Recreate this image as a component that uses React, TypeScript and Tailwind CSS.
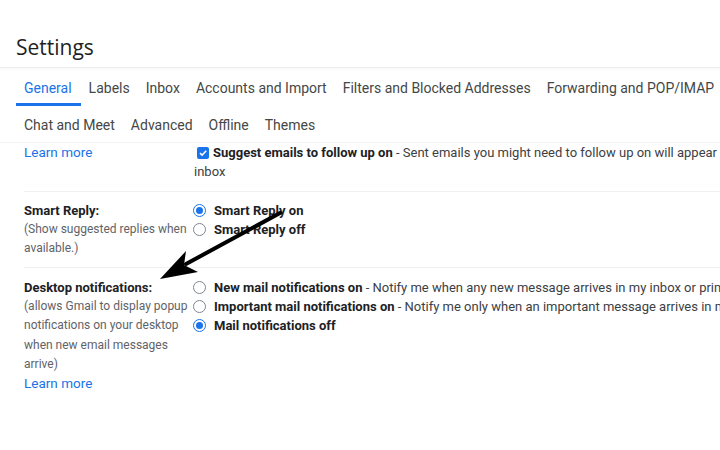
import React from "react";

const Radio = ({ checked }: { checked?: boolean }) =>
  checked ? (
    <span className="mr-[8px] inline-flex h-[13px] w-[13px] shrink-0 items-center justify-center rounded-full border-[1.5px] border-[#1a73e8]">
      <span className="h-[7px] w-[7px] rounded-full bg-[#1a73e8]" />
    </span>
  ) : (
    <span className="mr-[8px] inline-block h-[13px] w-[13px] shrink-0 rounded-full border border-[#80868b]" />
  );

export default function App() {
  const row1 = ["General", "Labels", "Inbox", "Accounts and Import", "Filters and Blocked Addresses", "Forwarding and POP/IMAP"];
  const row2 = ["Chat and Meet", "Advanced", "Offline", "Themes"];
  return (
    <div className="relative h-[450px] w-[720px] overflow-hidden bg-white text-[#202124]" style={{ fontFamily: "Roboto, 'Liberation Sans', sans-serif" }}>
      <div className="flex h-[68px] items-start border-b border-[#eceff1] pl-[16px] pt-[36px] shadow-[0_1px_2px_rgba(0,0,0,0.04)]">
        <span className="text-[21px] leading-[22px] text-[#1f1f1f]" style={{ fontFamily: "'Open Sans', Roboto, sans-serif" }}>Settings</span>
      </div>
      <div className="pl-[16px] text-[14px] text-[#444746]">
        <div className="flex h-[38px] whitespace-nowrap">
          {row1.map((t, i) => (
            <div key={t} className={"flex items-center px-[8px] pt-[5px] " + (i === 0 ? "border-b-[3px] border-[#1a73e8] pr-[9px] text-[#1a73e8]" : "border-b-[3px] border-transparent")}>
              {t}
            </div>
          ))}
        </div>
        <div className="flex h-[36px] whitespace-nowrap">
          {row2.map((t) => (
            <div key={t} className="flex items-center px-[8px] pt-[2px]">{t}</div>
          ))}
        </div>
      </div>
      <div className="border-t border-[#f1f3f4] text-[13px] leading-[19px]">
        <div className="ml-[24px] flex border-b border-[#eef0f1] pb-[10px]">
          <div className="w-[170px] shrink-0 text-[13.5px] text-[#1a73e8]">Learn more</div>
          <div className="min-w-0 whitespace-nowrap">
            <div className="flex items-center pl-[3px]">
              <span className="mr-[4px] inline-flex h-[12px] w-[12px] shrink-0 items-center justify-center rounded-[2px] bg-[#1a73e8]">
                <svg width="10" height="10" viewBox="0 0 10 10"><path d="M2 5.2 L4.1 7.2 L8.2 2.8" stroke="white" strokeWidth="1.6" fill="none" /></svg>
              </span>
              <span className="font-bold">Suggest emails to follow up on</span>
              <span className="text-[#3c4043]">&nbsp;- Sent emails you might need to follow up on will appear at the top of your</span>
            </div>
            <div className="text-[#3c4043]">inbox</div>
          </div>
        </div>
        <div className="ml-[24px] flex border-b border-[#eef0f1] py-[9px]">
          <div className="w-[169px] shrink-0">
            <div className="font-bold">Smart Reply:</div>
            <div className="text-[12px] text-[#5f6368]">(Show suggested replies when available.)</div>
          </div>
          <div className="whitespace-nowrap font-bold">
            <div className="flex items-center"><Radio checked />Smart Reply on</div>
            <div className="flex items-center"><Radio />Smart Reply off</div>
          </div>
        </div>
        <div className="ml-[24px] flex py-[10px]">
          <div className="w-[169px] shrink-0">
            <div className="font-bold">Desktop notifications:</div>
            <div className="text-[12px] leading-[19.3px] text-[#5f6368]">(allows Gmail to display popup notifications on your desktop when new email messages arrive)</div>
            <div className="text-[13.5px] text-[#1a73e8]">Learn more</div>
          </div>
          <div className="min-w-0 whitespace-nowrap">
            <div className="flex items-center"><Radio /><span className="font-bold">New mail notifications on</span><span className="text-[#3c4043]">&nbsp;- Notify me when any new message arrives in my inbox or primary tab</span></div>
            <div className="flex items-center"><Radio /><span className="font-bold">Important mail notifications on</span><span className="text-[#3c4043]">&nbsp;- Notify me only when an important message arrives in my inbox</span></div>
            <div className="flex items-center"><Radio checked /><span className="font-bold">Mail notifications off</span></div>
          </div>
        </div>
      </div>
      <svg className="pointer-events-none absolute left-0 top-0" width="720" height="450">
        <line x1="280" y1="213" x2="186" y2="264" stroke="#000" strokeWidth="4" strokeLinecap="round" />
        <polygon points="160,279 186,251 184,265 198,272" fill="#000" />
      </svg>
    </div>
  );
}
